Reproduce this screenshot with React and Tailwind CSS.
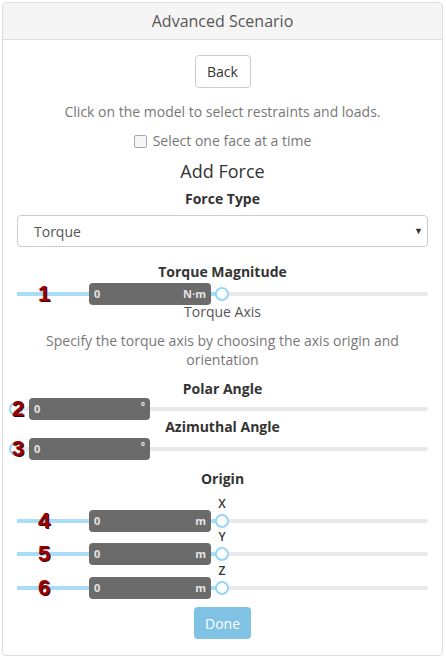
import React from "react";

const font = { fontFamily: '"Open Sans", "Liberation Sans", sans-serif' };

// slider with a value box floating over the track
function Slider({ boxLeft, boxWidth, unit, handle, num, numX, tick }) {
  return (
    <div className="relative h-[22px]">
      <div className="absolute left-0 right-0 top-[9px] h-[4px] rounded bg-[#e9e9e9]" />
      <div className="absolute left-0 top-[9px] h-[4px] bg-[#a9dcf6]" style={{ width: handle }} />
      {tick && (
        <div className="absolute top-[-15px] -translate-x-1/2 text-[12px] font-semibold text-[#333]" style={{ left: handle }}>
          {tick}
        </div>
      )}
      <div
        className="absolute top-[4px] h-[14px] w-[14px] -translate-x-1/2 rounded-full border-2 border-[#95d5f5] bg-white"
        style={{ left: handle }}
      />
      <div
        className="absolute top-0 flex h-[22px] items-center justify-between rounded-[4px] bg-[#6b6b6b] pl-[5px] pr-[5px] text-[11px] font-bold text-[#e4e4e4]"
        style={{ left: boxLeft, width: boxWidth }}
      >
        <span>0</span>
        <span className={unit === "°" ? "text-[10px] -mt-[6px]" : ""}>{unit}</span>
      </div>
      <div
        className="absolute top-[-2px] -translate-x-1/2 text-[22px] font-bold leading-[26px] text-[#9a0000] [text-shadow:1px_1px_0_#3a0000]"
        style={{ left: numX, fontFamily: '"Liberation Sans", Arial, sans-serif' }}
      >
        {num}
      </div>
    </div>
  );
}

export default function App() {
  return (
    <div className="p-[2px] bg-white" style={font}>
      <div className="w-[441px] h-[654px] rounded-[4px] border border-[#dddddd] bg-white overflow-hidden">
        <div className="h-[37px] border-b border-[#dddddd] bg-[#f5f5f5] flex items-center justify-center text-[16px] text-[#555]">
          Advanced Scenario
        </div>
        <div className="px-[14px] text-center text-[14px] text-[#333]">
          <div className="pt-[15px] flex justify-center">
            <button className="h-[33px] w-[56px] rounded-[4px] border border-[#cccccc] bg-white text-[14px] text-[#333]">
              Back
            </button>
          </div>
          <div className="mt-[14px] leading-[20px] text-[#777]">Click on the model to select restraints and loads.</div>
          <div className="mt-[9px] flex items-center justify-center gap-[6px] leading-[20px] text-[#777]">
            <span className="inline-block h-[13px] w-[13px] rounded-[2px] border border-[#aaa] bg-[#f6f6f6]" />
            <span>Select one face at a time</span>
          </div>
          <div className="mt-[7px] text-[18px] leading-[26px] text-[#333]">Add Force</div>
          <div className="mt-[5px] font-bold leading-[20px] text-[#333]">Force Type</div>
          <div className="mt-[6px] flex h-[32px] items-center justify-between rounded-[4px] border border-[#cccccc] pl-[16px] pr-[4px] text-[#555]">
            <span>Torque</span>
            <span className="text-[9px] text-[#333]">▼</span>
          </div>
          <div className="mt-[15px] font-bold leading-[20px]">Torque Magnitude</div>
          <div className="mt-[1px]">
            <Slider boxLeft={72} boxWidth={122} unit="N·m" handle={205} num="1" numX={27} />
          </div>
          <div className="-mt-[3px] leading-[20px] text-[#555]">Torque Axis</div>
          <div className="mt-[9px] leading-[19px] text-[#777]">
            Specify the torque axis by choosing the axis origin and orientation
          </div>
          <div className="mt-[10px] font-bold leading-[20px]">Polar Angle</div>
          <div className="-mt-[1px]">
            <Slider boxLeft={12} boxWidth={121} unit="°" handle={-1} num="2" numX={1} />
          </div>
          <div className="-mt-[3px] font-bold leading-[20px]">Azimuthal Angle</div>
          <div className="mt-[1px]">
            <Slider boxLeft={12} boxWidth={121} unit="°" handle={-1} num="3" numX={1} />
          </div>
          <div className="mt-[9px] font-bold leading-[20px]">Origin</div>
          <div className="mt-[21px]">
            <Slider boxLeft={72} boxWidth={122} unit="m" handle={205} num="4" numX={27} tick="X" />
          </div>
          <div className="mt-[11px]">
            <Slider boxLeft={72} boxWidth={122} unit="m" handle={205} num="5" numX={27} tick="Y" />
          </div>
          <div className="mt-[12px]">
            <Slider boxLeft={72} boxWidth={122} unit="m" handle={205} num="6" numX={27} tick="Z" />
          </div>
          <div className="mt-[8px] flex justify-center">
            <button className="h-[32px] w-[57px] rounded-[4px] bg-[#7fc2e3] text-[14px] text-white">Done</button>
          </div>
        </div>
      </div>
    </div>
  );
}
